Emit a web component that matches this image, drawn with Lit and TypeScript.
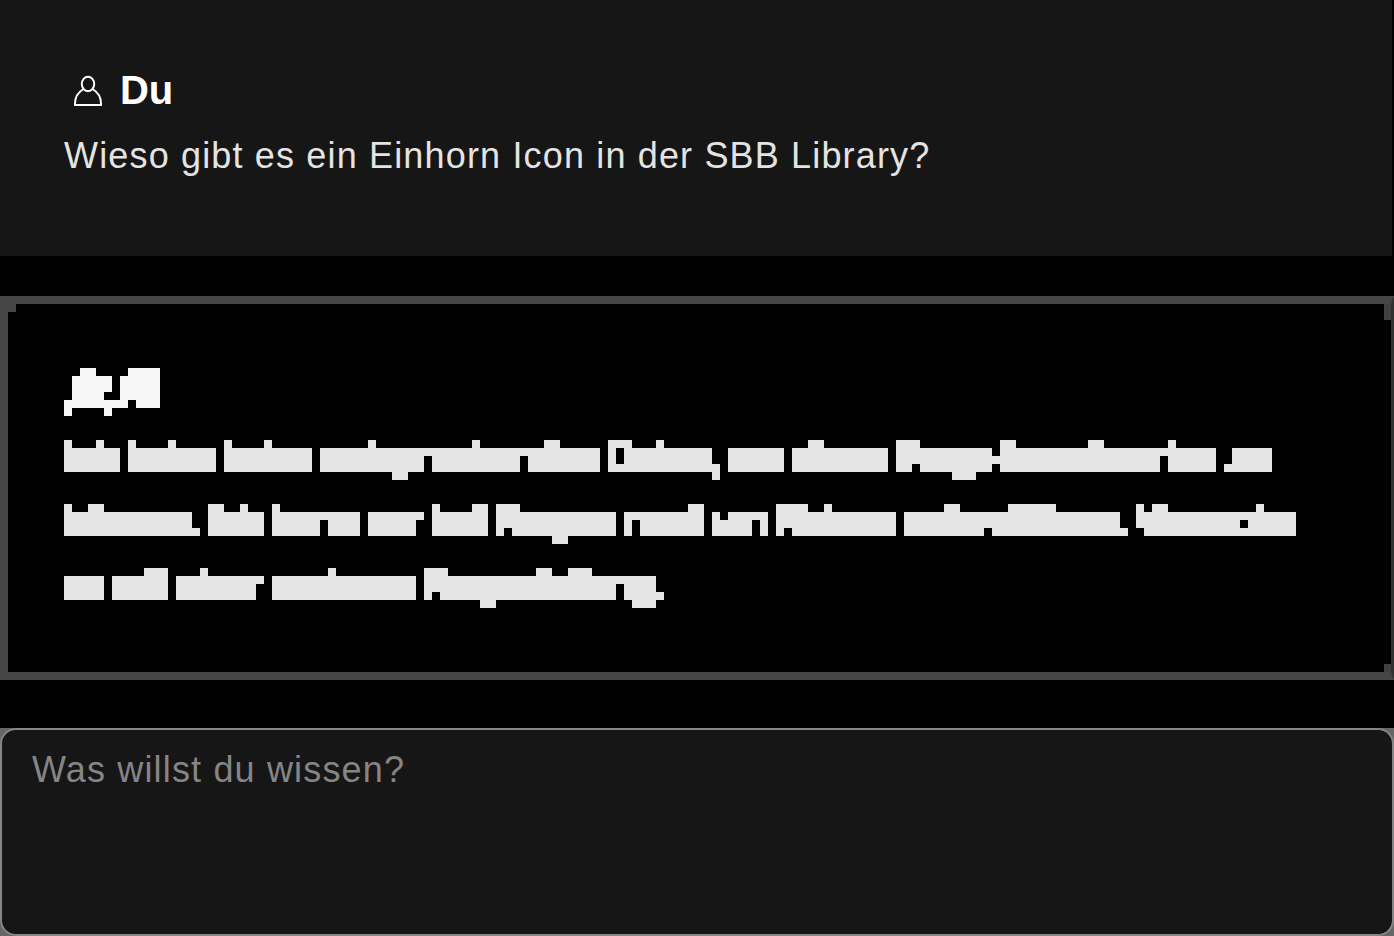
import { LitElement, html, css, svg } from "lit";
import { customElement, property } from "lit/decorators.js";

type Runs = number[][];

// Each row lists start/end column pairs of filled mosaic tiles.
const TITLE: Runs = [
  [2, 4, 8, 12],
  [1, 6, 7, 12],
  [1, 6, 7, 12],
  [1, 5, 7, 12],
  [0, 8, 9, 12],
  [0, 1, 5, 6],
];

const LINES: Runs[] = [
  [
    [0, 1, 4, 5, 8, 9, 13, 14, 20, 21, 25, 26, 38, 39, 51, 52, 60, 62, 68, 71, 74, 75, 93, 95, 104, 107, 117, 119, 128, 130, 138, 139],
    [0, 7, 8, 19, 20, 31, 32, 67, 68, 69, 70, 81, 83, 90, 91, 103, 104, 116, 117, 144, 146, 151],
    [0, 7, 8, 19, 20, 31, 32, 45, 46, 57, 58, 67, 68, 69, 70, 81, 83, 90, 91, 103, 104, 137, 138, 144, 146, 151],
    [0, 7, 8, 19, 20, 31, 32, 45, 46, 57, 58, 67, 68, 82, 83, 90, 91, 103, 104, 106, 107, 116, 117, 137, 138, 144, 145, 151],
    [41, 43, 81, 82, 111, 114],
  ],
  [
    [0, 1, 3, 5, 18, 20, 22, 23, 26, 27, 46, 47, 51, 53, 54, 57, 78, 80, 89, 93, 95, 96, 110, 112, 118, 124, 134, 135, 136, 138, 149, 150],
    [0, 16, 18, 25, 26, 37, 38, 45, 46, 53, 54, 69, 70, 80, 81, 82, 83, 88, 89, 104, 105, 132, 134, 154],
    [0, 16, 18, 25, 26, 32, 33, 37, 38, 44, 46, 53, 54, 69, 70, 71, 72, 80, 81, 86, 87, 88, 89, 104, 105, 132, 134, 147, 148, 154],
    [0, 17, 18, 25, 26, 32, 33, 37, 38, 44, 46, 53, 54, 55, 56, 69, 70, 71, 72, 80, 81, 86, 87, 88, 89, 90, 91, 104, 105, 115, 116, 133, 135, 154],
    [61, 63],
  ],
  [
    [10, 13, 17, 18, 33, 34, 45, 48, 59, 61, 63, 66],
    [0, 5, 6, 13, 14, 25, 26, 44, 45, 74],
    [0, 5, 6, 13, 14, 24, 26, 44, 45, 69, 70, 74],
    [0, 5, 6, 13, 14, 24, 26, 44, 45, 46, 47, 69, 70, 75],
    [52, 54, 71, 74],
  ],
];

@customElement("mosaic-line")
export class MosaicLine extends LitElement {
  @property({ attribute: false }) rows: Runs = [];

  static styles = css`
    :host { display: block; }
    svg { display: block; fill: currentColor; shape-rendering: crispEdges; }
  `;

  render() {
    const tiles = this.rows.flatMap((runs, y) => {
      const out = [];
      for (let i = 0; i < runs.length; i += 2) {
        out.push(svg`<rect x=${runs[i]} y=${y} width=${runs[i + 1] - runs[i]} height="1"></rect>`);
      }
      return out;
    });
    const h = this.rows.length;
    return html`<svg width="1240" height=${h * 8} viewBox="0 0 155 ${h}">${tiles}</svg>`;
  }
}

@customElement("app-root")
export class AppRoot extends LitElement {
  static styles = css`
    :host {
      display: flex;
      flex-direction: column;
      width: 1394px;
      height: 936px;
      overflow: hidden;
      background: #000;
      font-family: "Liberation Sans", Arial, sans-serif;
    }
    .question {
      box-sizing: border-box;
      width: 1392px;
      height: 256px;
      padding: 66px 64px 0;
      background: #161616;
    }
    .author { display: flex; align-items: center; height: 48px; gap: 8px; }
    .user { display: block; width: 48px; height: 48px; }
    .name { font-size: 40px; line-height: 48px; font-weight: 700; color: #fff; letter-spacing: -0.2px; }
    .message { margin: 10px 0 0; font-size: 36px; line-height: 64px; color: #e4e4e4; letter-spacing: 1.16px; white-space: nowrap; }
    .answer {
      box-sizing: border-box;
      width: 1394px;
      height: 384px;
      margin-top: 40px;
      padding: 64px 56px 0;
      border-style: solid;
      border-width: 8px 3px 8px 8px;
      border-color: #464646 #303030 #464646 #464646;
      background:
        linear-gradient(#464646, #464646) left top / 8px 8px no-repeat,
        linear-gradient(#404040, #404040) right top / 7px 16px no-repeat,
        linear-gradient(#404040, #404040) right bottom / 7px 8px no-repeat;
    }
    .title { color: #f6f6f6; margin-bottom: 24px; }
    .lines { display: grid; gap: 24px; color: #e4e4e4; }
    .composer {
      height: 208px;
      margin-top: 48px;
      background: #666;
    }
    .prompt {
      box-sizing: border-box;
      width: 1394px;
      height: 208px;
      border: 2px solid #858585;
      border-radius: 16px;
      padding: 8px 30px;
      background: #161616;
      color: #858585;
      font-size: 36px;
      line-height: 64px;
      letter-spacing: 1.16px;
    }
  `;

  render() {
    return html`
      <section class="question">
        <div class="author">
          <svg class="user" viewBox="0 0 48 48" fill="none" stroke="#fff" stroke-width="2">
            <ellipse cx="24" cy="18" rx="6.2" ry="7.2"></ellipse>
            <path d="M19.500 23C14.500 26 11 31.500 11 37.500V39H37V37.500C37 31.500 33.500 26 28.500 23"></path>
          </svg>
          <span class="name">Du</span>
        </div>
        <p class="message">Wieso gibt es ein Einhorn Icon in der SBB Library?</p>
      </section>
      <section class="answer">
        <mosaic-line class="title" .rows=${TITLE}></mosaic-line>
        <div class="lines">${LINES.map((rows) => html`<mosaic-line .rows=${rows}></mosaic-line>`)}</div>
      </section>
      <div class="composer"><div class="prompt">Was willst du wissen?</div></div>
    `;
  }
}
